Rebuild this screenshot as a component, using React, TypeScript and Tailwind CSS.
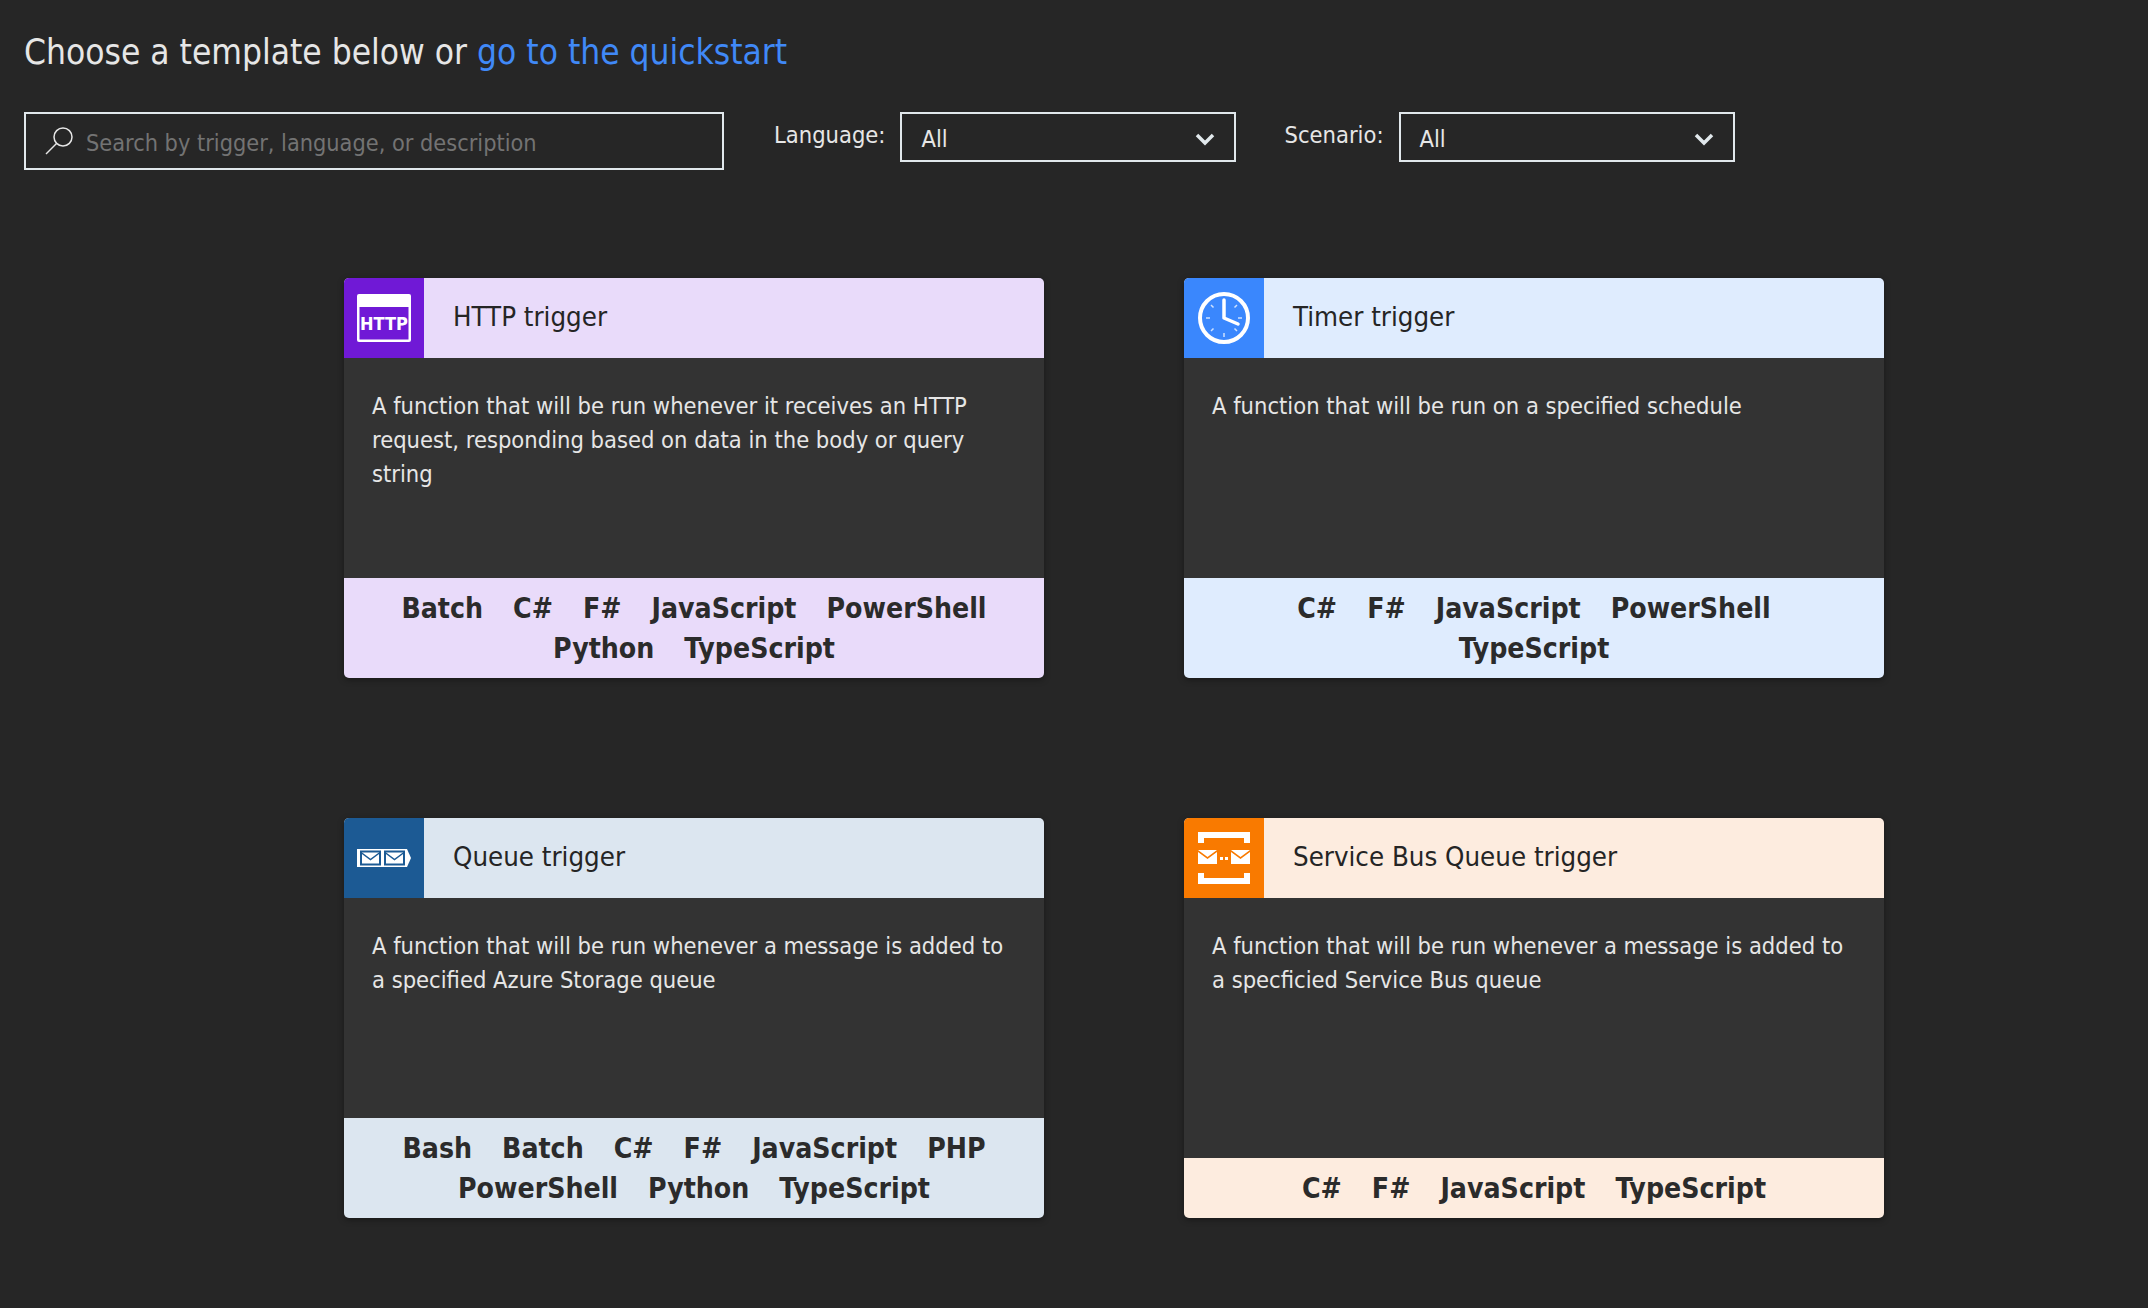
import React from 'react';

const HttpIcon = () => (
  <svg width="54" height="48" viewBox="0 0 54 48">
    <path d="M2 0h50a2 2 0 0 1 2 2v44a2 2 0 0 1-2 2H2a2 2 0 0 1-2-2V2a2 2 0 0 1 2-2z" fill="#fff" />
    <rect x="2.500" y="13" width="49" height="32.500" fill="#7019d6" />
    <text x="27" y="36" textAnchor="middle" fontSize="18" fontWeight="700" fill="#fff" fontFamily="'DejaVu Sans', sans-serif">HTTP</text>
  </svg>
);

const ClockIcon = () => (
  <svg width="52" height="52" viewBox="0 0 52 52" fill="none" stroke="#fff">
    <circle cx="26" cy="26" r="24" strokeWidth="4" />
    <path d="M26 8v18l14 6" strokeWidth="3.500" strokeLinecap="round" strokeLinejoin="round" />
    <path d="M26 41v4M8 26h4M40 26h4M13 13l2.500 2.500M39 13l-2.500 2.500M13 39l2.500-2.500M39 39l-2.500-2.500" strokeWidth="1.500" strokeOpacity="0.75" />
  </svg>
);

const QueueIcon = () => (
  <svg width="54" height="18" viewBox="0 0 54 18">
    <path d="M0 0h50l4 9-4 9H0z" fill="#fff" />
    <g fill="none" stroke="#1c5a94" strokeWidth="1.500">
      <rect x="4" y="2.500" width="19" height="13" strokeWidth="2" />
      <path d="M4 3.500l9.500 7 9.500-7" />
      <rect x="28" y="2.500" width="19" height="13" strokeWidth="2" />
      <path d="M28 3.500l9.500 7 9.500-7" />
    </g>
  </svg>
);

const BusIcon = () => (
  <svg width="52" height="52" viewBox="0 0 52 52" fill="#fff">
    <path d="M0 0h52v11h-6V6H6v5H0zM0 41h6v5h40v-5h6v11H0z" />
    <path d="M0 20l9.500 7 9.500-7v12H0zM33 20l9.500 7 9.500-7v12H33z" />
    <path d="M0 18h19l-9.500 7zM33 18h19l-9.500 7z" />
    <path d="M22 25h3v3h-3zM27 25h3v3h-3z" />
  </svg>
);

type Template = {
  title: string;
  desc: string;
  langs: string[];
  icon: React.ReactNode;
  iconBg: string;
  tint: string;
  bodyH: string;
};

const templates: Template[] = [
  {
    title: 'HTTP trigger',
    desc: 'A function that will be run whenever it receives an HTTP request, responding based on data in the body or query string',
    langs: ['Batch', 'C#', 'F#', 'JavaScript', 'PowerShell', 'Python', 'TypeScript'],
    icon: <HttpIcon />,
    iconBg: 'bg-[#7019d6]',
    tint: 'bg-[#e9dbfa]',
    bodyH: 'h-[220px]',
  },
  {
    title: 'Timer trigger',
    desc: 'A function that will be run on a specified schedule',
    langs: ['C#', 'F#', 'JavaScript', 'PowerShell', 'TypeScript'],
    icon: <ClockIcon />,
    iconBg: 'bg-[#3a87fd]',
    tint: 'bg-[#dfecfe]',
    bodyH: 'h-[220px]',
  },
  {
    title: 'Queue trigger',
    desc: 'A function that will be run whenever a message is added to a specified Azure Storage queue',
    langs: ['Bash', 'Batch', 'C#', 'F#', 'JavaScript', 'PHP', 'PowerShell', 'Python', 'TypeScript'],
    icon: <QueueIcon />,
    iconBg: 'bg-[#1c5a94]',
    tint: 'bg-[#dce6f0]',
    bodyH: 'h-[220px]',
  },
  {
    title: 'Service Bus Queue trigger',
    desc: 'A function that will be run whenever a message is added to a specficied Service Bus queue',
    langs: ['C#', 'F#', 'JavaScript', 'TypeScript'],
    icon: <BusIcon />,
    iconBg: 'bg-[#f97a00]',
    tint: 'bg-[#fdecdf]',
    bodyH: 'h-[260px]',
  },
];

const Card = ({ t }: { t: Template }) => (
  <div className="w-[700px] rounded-[5px] overflow-hidden shadow-[0_2px_6px_rgba(0,0,0,0.35)]">
    <div className={`flex h-[80px] items-center text-[#252525] ${t.tint}`}>
      <div className={`flex h-[80px] w-[80px] shrink-0 items-center justify-center ${t.iconBg}`}>{t.icon}</div>
      <div className="pl-[29px] pb-[2px] text-[27.4px] leading-none">{t.title}</div>
    </div>
    <div className={`bg-[#333333] px-[28px] pt-[31px] text-[23.5px] leading-[34px] text-[#e6e6e6] ${t.bodyH}`}>{t.desc}</div>
    <div className={`flex flex-wrap justify-center gap-x-[30px] px-[28px] pt-[11px] pb-[9px] text-[28.2px] leading-[40px] font-bold text-[#2b2b2b] ${t.tint}`}>
      {t.langs.map((l) => (
        <span key={l}>{l}</span>
      ))}
    </div>
  </div>
);

const Select = ({ label }: { label: string }) => (
  <div className="flex items-start">
    <span className="pt-[6px] text-[23.5px] leading-[34px] text-[#e6e6e6]">{label}</span>
    <div className="ml-[15px] flex h-[50px] w-[336px] items-center justify-between border-2 border-[#e1e8ec] pl-[19px] pr-[19px] text-[23.5px] text-[#e6e6e6]">
      <span className="pt-[5px]">All</span>
      <svg width="20" height="14" viewBox="0 0 20 14" fill="none" stroke="#e1e8ec" strokeWidth="3.500" className="mt-[3px]">
        <path d="M2 3l8 8 8-8" />
      </svg>
    </div>
  </div>
);

export default function App() {
  return (
    <div className="min-h-[1308px] bg-[#262626] font-['DejaVu_Sans',sans-serif] [font-stretch:condensed]">
      <div className="px-[24px] pt-[30px]">
        <h1 className="text-[35px] leading-[44px] font-normal text-[#e6e6e6]">
          Choose a template below or <a className="text-[#4089f7]">go to the quickstart</a>
        </h1>
        <div className="mt-[38px] flex items-start">
          <div className="flex h-[58px] w-[700px] items-center border-2 border-[#e1e8ec] pl-[18px] text-[23.3px] text-[#737373]">
            <svg width="30" height="30" viewBox="0 0 30 30" fill="none" stroke="#e6e6e6" strokeWidth="1.500">
              <circle cx="19" cy="11" r="9" />
              <path d="M12.500 17.500L2 28" />
            </svg>
            <span className="ml-[12px] pt-[5px]">Search by trigger, language, or description</span>
          </div>
          <div className="ml-[50px]"><Select label="Language:" /></div>
          <div className="ml-[48px]"><Select label="Scenario:" /></div>
        </div>
      </div>
      <div className="mt-[108px] grid w-fit grid-cols-[700px_700px] gap-x-[140px] gap-y-[140px] pl-[344px]">
        {templates.map((t) => (
          <Card key={t.title} t={t} />
        ))}
      </div>
    </div>
  );
}
